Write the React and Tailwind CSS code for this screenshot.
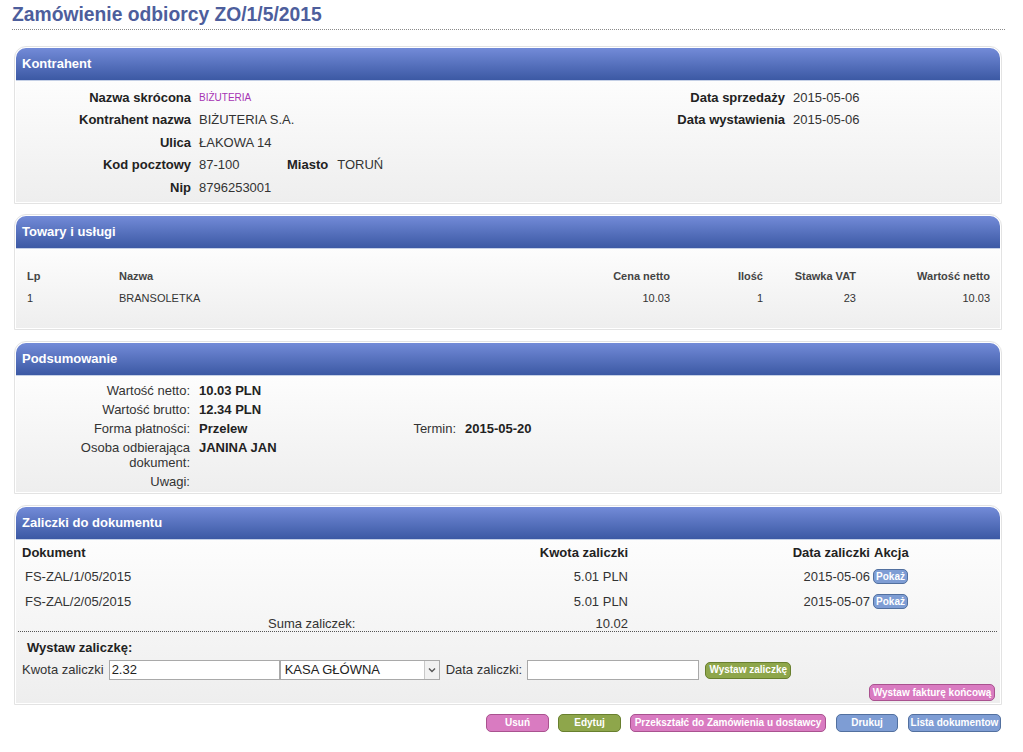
import React from "react";

const BTN = {
  pink: "bg-[#d97bc1] border-[#a9528f]",
  green: "bg-[#8ea64b] border-[#687f2e]",
  blue: "bg-[#7e9dd4] border-[#52709f]",
};

function Btn({ color, className = "", children }) {
  return (
    <div
      className={
        "flex items-center justify-center rounded-[5px] border text-white font-bold text-[10px] leading-none whitespace-nowrap " +
        BTN[color] +
        " " +
        className
      }
    >
      {children}
    </div>
  );
}

function Panel({ title, className = "", children }) {
  return (
    <div className="ml-[14px] w-[988px] rounded-t-[12px] border border-[#e3e3e3] bg-white p-[1px]">
      <div className="flex h-[32px] items-center rounded-t-[10px] bg-linear-to-b from-[#738bd8] to-[#3c59a4] px-[6px] text-[13px] font-bold text-white">
        {title}
      </div>
      <div className={"border-t border-[#c5d0e6] bg-linear-to-b from-[#fdfdfd] to-[#eeeeee] " + className}>
        {children}
      </div>
    </div>
  );
}

function KRow({ label, children }) {
  return (
    <div className="flex h-[22.5px] items-center">
      <div className="w-[175px] text-right font-bold text-[#222]">{label}</div>
      <div className="ml-[8px] flex items-center text-[#333]">{children}</div>
    </div>
  );
}

function SRow({ label, children }) {
  return (
    <div className="flex py-[2px] leading-[15px]">
      <div className="w-[174px] text-right text-[#333]">{label}</div>
      <div className="ml-[9px] font-bold text-[#222]">{children}</div>
    </div>
  );
}

export default function App() {
  return (
    <div className="min-h-[752px] w-[1023px] bg-white font-['Liberation_Sans',Arial,sans-serif] text-[13px]">
      {/* Title */}
      <div className="ml-[12px] w-[993px] border-b border-dotted border-[#8a8a8a] pt-[3px] pb-[2px]">
        <h1 className="text-[19.3px] font-bold leading-[24px] text-[#4d5e9c]">Zamówienie odbiorcy ZO/1/5/2015</h1>
      </div>

      {/* Kontrahent */}
      <div className="mt-[16px]">
        <Panel title="Kontrahent" className="h-[122px]">
          <div className="flex pt-[5px]">
            <div className="w-[629px]">
              <KRow label="Nazwa skrócona">
                <span className="text-[10px] text-[#a634b4]">BIŻUTERIA</span>
              </KRow>
              <KRow label="Kontrahent nazwa">BIŻUTERIA S.A.</KRow>
              <KRow label="Ulica">ŁAKOWA 14</KRow>
              <KRow label="Kod pocztowy">
                <span className="w-[88px]">87-100</span>
                <span className="font-bold text-[#222]">Miasto</span>
                <span className="ml-[9px]">TORUŃ</span>
              </KRow>
              <KRow label="Nip">8796253001</KRow>
            </div>
            <div>
              <div className="flex h-[22.5px] items-center">
                <div className="w-[140px] text-right font-bold text-[#222]">Data sprzedaży</div>
                <div className="ml-[8px] text-[#333]">2015-05-06</div>
              </div>
              <div className="flex h-[22.5px] items-center">
                <div className="w-[140px] text-right font-bold text-[#222]">Data wystawienia</div>
                <div className="ml-[8px] text-[#333]">2015-05-06</div>
              </div>
            </div>
          </div>
        </Panel>
      </div>

      {/* Towary i usługi */}
      <div className="mt-[10px]">
        <Panel title="Towary i usługi" className="h-[80px]">
          <div className="px-[11px] pt-[16px] text-[11px] text-[#333]">
            <div className="grid h-[22px] grid-cols-[92px_451px_100px_93px_93px_134px] items-center font-bold text-[#444]">
              <div>Lp</div>
              <div>Nazwa</div>
              <div className="text-right">Cena netto</div>
              <div className="text-right">Ilość</div>
              <div className="text-right">Stawka VAT</div>
              <div className="text-right">Wartość netto</div>
            </div>
            <div className="grid h-[22px] grid-cols-[92px_451px_100px_93px_93px_134px] items-center">
              <div>1</div>
              <div>BRANSOLETKA</div>
              <div className="text-right">10.03</div>
              <div className="text-right">1</div>
              <div className="text-right">23</div>
              <div className="text-right">10.03</div>
            </div>
          </div>
        </Panel>
      </div>

      {/* Podsumowanie */}
      <div className="mt-[11px]">
        <Panel title="Podsumowanie" className="h-[117px]">
          <div className="pt-[5px]">
            <SRow label="Wartość netto:">10.03 PLN</SRow>
            <SRow label="Wartość brutto:">12.34 PLN</SRow>
            <div className="flex py-[2px] leading-[15px]">
              <div className="w-[174px] text-right text-[#333]">Forma płatności:</div>
              <div className="ml-[9px] w-[205px] font-bold text-[#222]">Przelew</div>
              <div className="w-[52px] text-right text-[#333]">Termin:</div>
              <div className="ml-[9px] font-bold text-[#222]">2015-05-20</div>
            </div>
            <SRow
              label={
                <>
                  Osoba odbierająca
                  <br />
                  dokument:
                </>
              }
            >
              JANINA JAN
            </SRow>
            <SRow label="Uwagi:"></SRow>
          </div>
        </Panel>
      </div>

      {/* Zaliczki */}
      <div className="mt-[11px]">
        <Panel title="Zaliczki do dokumentu" className="h-[164px]">
          <div className="px-[6px] pt-[2px]">
            <div className="grid h-[22px] grid-cols-[470px_136px_242px_auto] items-center font-bold text-[#222]">
              <div>Dokument</div>
              <div className="text-right">Kwota zaliczki</div>
              <div className="text-right">Data zaliczki</div>
              <div className="pl-[4px]">Akcja</div>
            </div>
            {[
              ["FS-ZAL/1/05/2015", "5.01 PLN", "2015-05-06"],
              ["FS-ZAL/2/05/2015", "5.01 PLN", "2015-05-07"],
            ].map(([d, k, dt]) => (
              <div key={d} className="grid h-[25px] grid-cols-[470px_136px_242px_auto] items-center text-[#333]">
                <div className="pl-[3px]">{d}</div>
                <div className="text-right">{k}</div>
                <div className="text-right">{dt}</div>
                <div className="pl-[3px]">
                  <Btn color="blue" className="h-[15px] w-[35px] text-[9px]">
                    Pokaż
                  </Btn>
                </div>
              </div>
            ))}
            <div className="grid h-[17px] grid-cols-[470px_136px] items-center text-[#333]">
              <div className="pl-[246px]">Suma zaliczek:</div>
              <div className="text-right">10.02</div>
            </div>
          </div>
          <div className="ml-[2px] mr-[3px] border-t border-dotted border-[#555]" />
          <div className="mt-[7px] flex h-[18px] items-center pl-[11px] font-bold text-[#222]">Wystaw zaliczkę:</div>
          <div className="mt-[2px] flex h-[22px] items-center pl-[6px] text-[#333]">
            <span>Kwota zaliczki</span>
            <div className="ml-[5px] flex h-[20px] w-[171px] items-center border border-[#a9a9a9] bg-white px-[2px] text-[#222]">
              2.32
            </div>
            <div className="flex h-[20px] w-[160px] items-center border border-[#a9a9a9] bg-white text-[#222]">
              <span className="flex-1 pl-[4px]">KASA GŁÓWNA</span>
              <span className="flex h-[18px] w-[15px] items-center justify-center border-l border-[#c8c8c8] bg-[#f1f1f1]">
                <svg width="8" height="6" viewBox="0 0 8 6">
                  <path d="M1 1.5 L4 4.5 L7 1.5" fill="none" stroke="#555" strokeWidth="1.4" />
                </svg>
              </span>
            </div>
            <span className="ml-[6px]">Data zaliczki:</span>
            <div className="ml-[5px] h-[20px] w-[172px] border border-[#a9a9a9] bg-white" />
            <Btn color="green" className="ml-[6px] h-[17px] w-[86px]">
              Wystaw zaliczkę
            </Btn>
          </div>
          <div className="mt-[3px] flex justify-end pr-[5px]">
            <Btn color="pink" className="h-[17px] w-[126px]">
              Wystaw fakturę końcową
            </Btn>
          </div>
        </Panel>
      </div>

      {/* Bottom buttons */}
      <div className="ml-[14px] mt-[9px] flex w-[988px] justify-end pr-[1px]">
        <Btn color="pink" className="h-[18px] w-[63px]">
          Usuń
        </Btn>
        <Btn color="green" className="ml-[9px] h-[18px] w-[63px]">
          Edytuj
        </Btn>
        <Btn color="pink" className="ml-[9px] h-[18px] w-[196px]">
          Przekształć do Zamówienia u dostawcy
        </Btn>
        <Btn color="blue" className="ml-[10px] h-[18px] w-[62px]">
          Drukuj
        </Btn>
        <Btn color="blue" className="ml-[10px] h-[18px] w-[93px]">
          Lista dokumentow
        </Btn>
      </div>
    </div>
  );
}
